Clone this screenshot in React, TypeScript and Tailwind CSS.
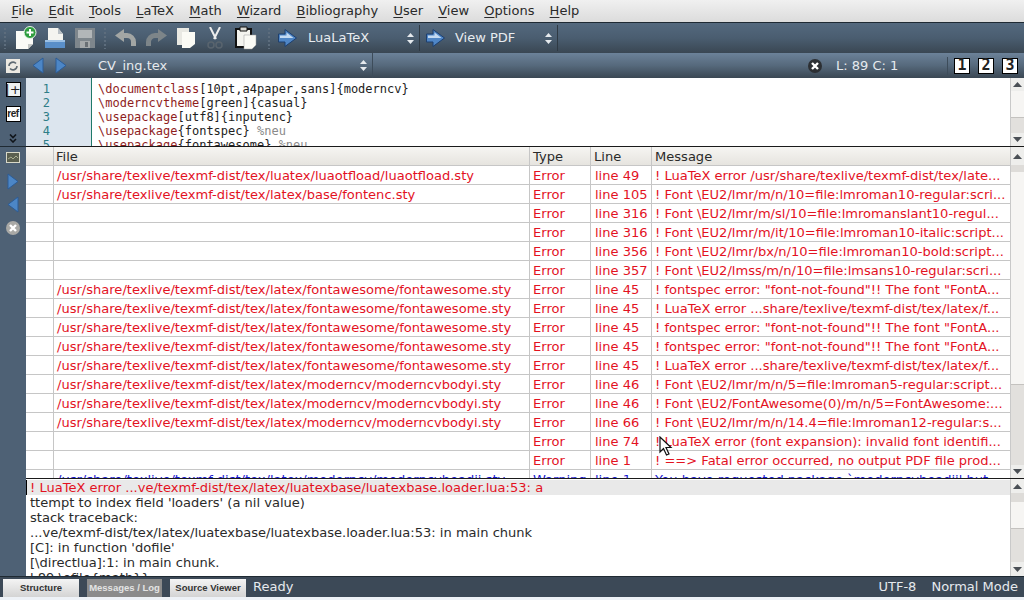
import type { ReactNode } from "react"

const sans = "font-['DejaVu_Sans','Liberation_Sans',sans-serif]"
const mono = "font-['DejaVu_Sans_Mono','Liberation_Mono',monospace]"

const FONTAWESOME = "/usr/share/texlive/texmf-dist/tex/latex/fontawesome/fontawesome.sty"
const BODYI = "/usr/share/texlive/texmf-dist/tex/latex/moderncv/moderncvbodyi.sty"

const rows = [
  ["/usr/share/texlive/texmf-dist/tex/luatex/luaotfload/luaotfload.sty", "line 49", "! LuaTeX error /usr/share/texlive/texmf-dist/tex/late..."],
  ["/usr/share/texlive/texmf-dist/tex/latex/base/fontenc.sty", "line 105", "! Font \\EU2/lmr/m/n/10=file:lmroman10-regular:scri..."],
  ["", "line 316", "! Font \\EU2/lmr/m/sl/10=file:lmromanslant10-regul..."],
  ["", "line 316", "! Font \\EU2/lmr/m/it/10=file:lmroman10-italic:script..."],
  ["", "line 356", "! Font \\EU2/lmr/bx/n/10=file:lmroman10-bold:script..."],
  ["", "line 357", "! Font \\EU2/lmss/m/n/10=file:lmsans10-regular:scri..."],
  [FONTAWESOME, "line 45", "! fontspec error: \"font-not-found\"!! The font \"FontA..."],
  [FONTAWESOME, "line 45", "! LuaTeX error ...share/texlive/texmf-dist/tex/latex/f..."],
  [FONTAWESOME, "line 45", "! fontspec error: \"font-not-found\"!! The font \"FontA..."],
  [FONTAWESOME, "line 45", "! fontspec error: \"font-not-found\"!! The font \"FontA..."],
  [FONTAWESOME, "line 45", "! LuaTeX error ...share/texlive/texmf-dist/tex/latex/f..."],
  [BODYI, "line 46", "! Font \\EU2/lmr/m/n/5=file:lmroman5-regular:script..."],
  [BODYI, "line 46", "! Font \\EU2/FontAwesome(0)/m/n/5=FontAwesome:..."],
  [BODYI, "line 66", "! Font \\EU2/lmr/m/n/14.4=file:lmroman12-regular:s..."],
  ["", "line 74", "! LuaTeX error (font expansion): invalid font identifi..."],
  ["", "line 1", "! ==> Fatal error occurred, no output PDF file prod..."],
]

const menus = ["File", "Edit", "Tools", "LaTeX", "Math", "Wizard", "Bibliography", "User", "View", "Options", "Help"]

function Icon({ w, h, children, className }: { w: number; h: number; children: ReactNode; className?: string }) {
  return (
    <svg width={w} height={h} viewBox={`0 0 ${w} ${h}`} className={`shrink-0 ${className ?? ""}`}>
      {children}
    </svg>
  )
}

function BlueArrow() {
  return (
    <Icon w={19} h={18}>
      <path d="M0.5 5 H7 V0.5 L18.5 9 L7 17.5 V13 H0.5 Z" fill="#4f86c6" stroke="#1d3f6e" />
      <path d="M2 6.5 H8.5 V3.5 L15.5 9 H2 Z" fill="#c3daf2" />
    </Icon>
  )
}

function Triangle({ dir }: { dir: "left" | "right" }) {
  return (
    <Icon w={12} h={17}>
      {dir === "left" ? (
        <path d="M11 1 L1 8.5 L11 16 Z" fill="#4c86c6" stroke="#2c5c96" />
      ) : (
        <path d="M1 1 L11 8.5 L1 16 Z" fill="#4c86c6" stroke="#2c5c96" />
      )}
    </Icon>
  )
}

function Grip() {
  return <div className="w-[5px] h-[22px] shrink-0 bg-[radial-gradient(#5d6d7d_1px,transparent_1px)] bg-[length:4px_4px]" />
}

function Spinner() {
  return (
    <Icon w={7} h={11}>
      <path d="M3.5 0 L7 4 H0 Z M0 7 H7 L3.5 11 Z" fill="#e6eaee" />
    </Icon>
  )
}

function CloseCircle({ bg, size = 14 }: { bg: string; size?: number }) {
  const c = size / 2
  return (
    <Icon w={size} h={size}>
      <circle cx={c} cy={c} r={c} fill={bg} />
      <path d={`M${c - 3} ${c - 3} L${c + 3} ${c + 3} M${c + 3} ${c - 3} L${c - 3} ${c + 3}`} stroke="#fff" strokeWidth="2.4" />
    </Icon>
  )
}

function ScrollBar({ buttonH, gapTop, thumb, trough }: { buttonH: number; gapTop: number; thumb: number; trough: number }) {
  return (
    <div className="w-[14px] shrink-0 flex flex-col bg-[#e4e2df] border-l border-[#c9c9c9]">
      <div className="flex items-center justify-center shrink-0 bg-[#eeeeec]" style={{ height: buttonH }}>
        <Icon w={9} h={5}><path d="M4.5 0 L9 5 H0 Z" fill="#4a4f55" /></Icon>
      </div>
      <div className="shrink-0 bg-[#dedcd9]" style={{ height: gapTop }} />
      <div className="shrink-0 bg-[#f6f5f3] border-b border-[#c4c2bf]" style={{ height: thumb }} />
      <div className="shrink-0 bg-[#e2e0dd]" style={{ height: trough }} />
      <div className="flex flex-1 items-center justify-center bg-[#eeeeec]">
        <Icon w={9} h={5}><path d="M0 0 H9 L4.5 5 Z" fill="#4a4f55" /></Icon>
      </div>
    </div>
  )
}

function NumberBox({ n }: { n: number }) {
  return (
    <div className={`w-[16px] h-[16px] bg-white border border-black flex items-center justify-center text-[15px] leading-none font-bold text-[#222] ${mono}`}>
      {n}
    </div>
  )
}

function Row({ file, line, message, color, type }: { file: string; line: string; message: string; color: string; type: string }) {
  return (
    <div className={`flex h-[19px] shrink-0 border-b border-[#c6c6c6] text-[13.06px] leading-[20px] whitespace-nowrap ${color}`}>
      <div className="w-[28px] shrink-0 border-r border-[#c6c6c6]" />
      <div className="w-[476px] shrink-0 border-r border-[#c6c6c6] pl-[3px] overflow-hidden">{file}</div>
      <div className="w-[61px] shrink-0 border-r border-[#c6c6c6] pl-[3px]">{type}</div>
      <div className="w-[61px] shrink-0 border-r border-[#c6c6c6] pl-[4px]">{line}</div>
      <div className="flex-1 pl-[3px] overflow-hidden">{message}</div>
    </div>
  )
}

export default function App() {
  return (
    <div className={`relative w-[1024px] h-[600px] overflow-hidden flex flex-col bg-[#eef2f7] ${sans}`}>
      {/* Menu bar */}
      <div className="h-[23px] shrink-0 flex items-center pl-[4px] text-[13px] text-[#2a2a2a] bg-gradient-to-b from-[#f0f0f0] to-[#dcdcdc] border-b border-[#1f2a33]">
        {menus.map((m) => (
          <span key={m} className="px-[7.6px]">
            <span className="underline underline-offset-2">{m[0]}</span>
            {m.slice(1)}
          </span>
        ))}
      </div>

      {/* Main toolbar */}
      <div className="h-[30px] shrink-0 flex items-center bg-gradient-to-b from-[#54697e] via-[#4a5d70] to-[#3a4753]">
        <div className="w-[3px]" />
        <Grip />
        <div className="w-[7px]" />
        <Icon w={22} h={24}>
          <path d="M1 5 H18 V18 L13 23 H1 Z" fill="#fbfbf7" />
          <path d="M18 18 L13 23 V18 Z" fill="#c6c8c6" />
          <circle cx="15" cy="6.5" r="6" fill="#2f9e3f" stroke="#e8f5e8" />
          <path d="M15 3 V10 M11.5 6.5 H18.5" stroke="#fff" strokeWidth="2" />
        </Icon>
        <div className="w-[7px]" />
        <Icon w={22} h={22}>
          <path d="M4 1 H14 L19 7 V14 H4 Z" fill="#f4f4f0" />
          <path d="M14 1 V7 H19 Z" fill="#b9c0c6" />
          <path d="M1 13 H21 V21 H1 Z" fill="#5a8fc9" />
          <path d="M1 13 H21 V15 H1 Z" fill="#9cc0e4" />
        </Icon>
        <div className="w-[9px]" />
        <Icon w={20} h={20}>
          <path d="M0 0 H20 V20 H0 Z" fill="#7e868c" />
          <path d="M3 2 H17 V10 H3 Z" fill="#b2b6b8" />
          <path d="M5 13 H15 V20 H5 Z" fill="#a5a9ab" />
          <path d="M10 14 H13 V19 H10 Z" fill="#6a7075" />
        </Icon>
        <div className="w-[8px]" />
        <Grip />
        <div className="w-[7px]" />
        <Icon w={22} h={18}>
          <path d="M7 6.5 H12 A6.5 6.5 0 0 1 18.5 13 V17" fill="none" stroke="#a3a6a4" strokeWidth="5" />
          <path d="M0 6.5 L9 0 V13 Z" fill="#a3a6a4" />
        </Icon>
        <div className="w-[8px]" />
        <Icon w={22} h={18}>
          <path d="M15 6.5 H10 A6.5 6.5 0 0 0 3.5 13 V17" fill="none" stroke="#7d8589" strokeWidth="5" />
          <path d="M22 6.5 L13 0 V13 Z" fill="#7d8589" />
        </Icon>
        <div className="w-[9px]" />
        <Icon w={20} h={22}>
          <path d="M1 1 H13 V18 H1 Z" fill="#e9e9e3" />
          <path d="M6 5 H19 V17 L14 21 H6 Z" fill="#fbfbf5" />
        </Icon>
        <div className="w-[9px]" />
        <Icon w={20} h={22}>
          <path d="M5 0 L11 12 M15 0 L9 12" stroke="#eeeeee" strokeWidth="2" />
          <circle cx="6" cy="18" r="3" fill="none" stroke="#59646e" strokeWidth="1.5" />
          <circle cx="14" cy="18" r="3" fill="none" stroke="#59646e" strokeWidth="1.5" />
        </Icon>
        <div className="w-[10px]" />
        <Icon w={22} h={24}>
          <path d="M1 3 H16 V21 H1 Z" fill="#f4f4ef" stroke="#111" strokeWidth="2" />
          <path d="M5 1 H12 V5 H5 Z" fill="#d8d8d2" stroke="#111" />
          <path d="M9 9 H21 V19 L17 23 H9 Z" fill="#fbfbf6" stroke="#999" strokeWidth="0.5" />
        </Icon>
        <div className="w-[10px]" />
        <Grip />
        <div className="w-[6px]" />
        <BlueArrow />
        <span className="ml-[11px] w-[99px] text-[13px] text-[#e8ecf0]">LuaLaTeX</span>
        <Spinner />
        <div className="ml-[5px] w-px h-[26px] bg-[#2f3a44]" />
        <div className="w-[6px]" />
        <BlueArrow />
        <span className="ml-[10px] w-[90px] text-[13px] text-[#e8ecf0]">View PDF</span>
        <Spinner />
        <div className="ml-[5px] w-px h-[26px] bg-[#2f3a44]" />
      </div>

      {/* Document bar */}
      <div className="h-[25px] shrink-0 flex items-center bg-gradient-to-b from-[#6c8299] via-[#56697c] to-[#3a4753] text-[13px] text-[#e6eaee]">
        <div className="ml-[6px] w-[14px] h-[14px] bg-[#ece9e2] flex items-center justify-center">
          <Icon w={10} h={10}>
            <path d="M1 5 A4 4 0 0 1 8 2.5 M9 5 A4 4 0 0 1 2 7.5" fill="none" stroke="#5f6a72" strokeWidth="1.6" />
          </Icon>
        </div>
        <div className="ml-[12px] flex gap-[11px]">
          <Triangle dir="left" />
          <Triangle dir="right" />
        </div>
        <span className="ml-[31px] w-[262px]">CV_ing.tex</span>
        <Spinner />
        <div className="ml-[5px] w-px h-[25px] bg-[#3d4c5a]" />
        <div className="ml-[435px]">
          <CloseCircle bg="#2c2f33" />
        </div>
        <span className="ml-[14px] w-[111px]">L: 89 C: 1</span>
        <div className="w-px h-[18px] bg-[#3d4c5a]" />
        <div className="ml-[6px] flex gap-[8px]">
          <NumberBox n={1} />
          <NumberBox n={2} />
          <NumberBox n={3} />
        </div>
      </div>

      {/* Body */}
      <div className="flex-1 min-h-0 flex">
        <div className="w-[26px] shrink-0 flex flex-col items-center bg-[#4e6175]">
          <div className="mt-[4px] w-[15px] h-[15px] bg-[#eef0f0] border border-black flex items-center justify-center text-[13px] leading-none text-[#222]">|+</div>
          <div className="mt-[9px] w-[15px] h-[16px] bg-white border border-black flex items-center justify-center text-[10px] font-bold leading-none tracking-tighter text-[#222] font-['Liberation_Sans',sans-serif]">ref</div>
          <div className="mt-[12px] h-[9px]">
            <Icon w={8} h={9}>
              <path d="M1 0.5 L4 3.5 L7 0.5 M1 5 L4 8 L7 5" fill="none" stroke="#10151a" strokeWidth="1.6" />
            </Icon>
          </div>
          <div className="mt-[3px] h-px w-full bg-[#1f2a33]" />
          <div className="mt-[5px]">
            <Icon w={14} h={11}>
              <path d="M0 0 H14 V11 H0 Z" fill="#d8d8c8" />
              <path d="M1 1 H13 V10 H1 Z" fill="#5a5f4f" />
              <path d="M2 7 L5 5 L7 7 L10 4 L12 6" fill="none" stroke="#a8ad90" />
            </Icon>
          </div>
          <div className="mt-[10px]"><Triangle dir="right" /></div>
          <div className="mt-[6px]"><Triangle dir="left" /></div>
          <div className="mt-[8px]"><CloseCircle bg="#a9a9a6" /></div>
        </div>

        <div className="flex-1 min-w-0 flex flex-col">
          {/* Editor */}
          <div className="h-[68px] shrink-0 flex bg-white">
            <div className={`w-[66px] shrink-0 bg-[#dce5ee] border-r border-[#1f7a6a] pr-[41px] pt-[4px] text-right text-[12px] leading-[14px] text-[#2e7d87] overflow-hidden ${mono}`}>
              <div>1</div>
              <div>2</div>
              <div>3</div>
              <div>4</div>
              <div>5</div>
            </div>
            <div className={`flex-1 pl-[6px] pt-[4px] text-[12px] leading-[14px] text-[#222] whitespace-pre overflow-hidden ${mono}`}>
              <div><span className="text-[#8f1d1d]">\documentclass</span>[10pt,a4paper,sans]{"{moderncv}"}</div>
              <div><span className="text-[#8f1d1d]">\moderncvtheme</span>[green]{"{casual}"}</div>
              <div><span className="text-[#8f1d1d]">\usepackage</span>[utf8]{"{inputenc}"}</div>
              <div><span className="text-[#8f1d1d]">\usepackage</span>{"{fontspec}"} <span className="text-[#8a8a8a]">%neu</span></div>
              <div><span className="text-[#8f1d1d]">\usepackage</span>{"{fontawesome}"} <span className="text-[#8a8a8a]">%neu</span></div>
            </div>
            <ScrollBar buttonH={13} gapTop={0} thumb={27} trough={15} />
          </div>

          {/* Messages table */}
          <div className="h-[333px] shrink-0 flex border-t border-b border-[#1a1a1a] bg-white">
            <div className="flex-1 min-w-0 flex flex-col overflow-hidden">
              <div className="flex h-[19px] shrink-0 text-[13.06px] leading-[20px] text-[#2a2a2a] bg-gradient-to-b from-[#f6f5f2] to-[#e6e4df] border-b border-[#c6c6c6]">
                <div className="w-[28px] shrink-0 border-r border-[#c6c6c6]" />
                <div className="w-[476px] shrink-0 border-r border-[#c6c6c6] pl-[2px]">File</div>
                <div className="w-[61px] shrink-0 border-r border-[#c6c6c6] pl-[3px]">Type</div>
                <div className="w-[61px] shrink-0 border-r border-[#c6c6c6] pl-[3px]">Line</div>
                <div className="flex-1 pl-[3px]">Message</div>
              </div>
              {rows.map((r, i) => (
                <Row key={i} file={r[0]} line={r[1]} message={r[2]} type="Error" color="text-[#e3121f]" />
              ))}
              <Row
                file="/usr/share/texlive/texmf-dist/tex/latex/moderncv/moderncvheadii.sty"
                line="line 1"
                message="You have requested package `moderncvheadii' but..."
                type="Warning"
                color="text-[#1a1ad0]"
              />
            </div>
            <ScrollBar buttonH={18} gapTop={7} thumb={213} trough={80} />
          </div>

          {/* Log */}
          <div className="flex-1 min-h-0 flex bg-white">
            <div className="flex-1 min-w-0 overflow-hidden text-[13.06px] leading-[15px] text-[#2a2a2a] whitespace-pre pt-px">
              <div className="h-[15px] bg-[#e9e9e9] pl-[3px] text-[#e3121f] border-l border-black">! LuaTeX error ...ve/texmf-dist/tex/latex/luatexbase/luatexbase.loader.lua:53: a</div>
              <div className="pl-[4px]">ttempt to index field 'loaders' (a nil value)</div>
              <div className="pl-[4px]">stack traceback:</div>
              <div className="pl-[4px]">...ve/texmf-dist/tex/latex/luatexbase/luatexbase.loader.lua:53: in main chunk</div>
              <div className="pl-[4px]">[C]: in function 'dofile'</div>
              <div className="pl-[4px]">[\directlua]:1: in main chunk.</div>
              <div className="pl-[4px]">{"l.89 \\ofile{math}}"}</div>
            </div>
            <ScrollBar buttonH={14} gapTop={9} thumb={27} trough={33} />
          </div>
        </div>
      </div>

      {/* Status bar */}
      <div className="h-[21px] shrink-0 flex items-center bg-[#3c4957] border-t border-[#1f2a33] text-[13px] text-[#e6eaee]">
        <div className="ml-[3px] w-[76px] h-[18px] mt-[2px] flex items-center justify-center bg-gradient-to-b from-[#f4f4f4] to-[#d4d4d4] text-[9.5px] font-bold text-[#333] font-['Liberation_Sans',sans-serif]">Structure</div>
        <div className="ml-[8px] w-[75px] h-[18px] mt-[2px] flex items-center justify-center bg-[#8b8b8b] text-[9.5px] font-bold text-[#e4e4e4] font-['Liberation_Sans',sans-serif]">Messages / Log</div>
        <div className="ml-[8px] w-[76px] h-[18px] mt-[2px] flex items-center justify-center bg-gradient-to-b from-[#f4f4f4] to-[#d4d4d4] text-[9.5px] font-bold text-[#333] font-['Liberation_Sans',sans-serif]">Source Viewer</div>
        <span className="ml-[7px] flex-1">Ready</span>
        <span className="mr-[15px]">UTF-8</span>
        <span className="mr-[6px]">Normal Mode</span>
      </div>
      <div className="h-[3px] shrink-0 bg-[#eef2f7]" />

      {/* Mouse pointer */}
      <svg width="14" height="20" viewBox="0 0 14 20" className="absolute left-[659px] top-[436px]">
        <path d="M1 1 V16 L4.5 12.5 L7.5 19 L10 18 L7 11.5 H12 Z" fill="#fff" stroke="#111" strokeWidth="1.2" />
      </svg>
    </div>
  )
}
